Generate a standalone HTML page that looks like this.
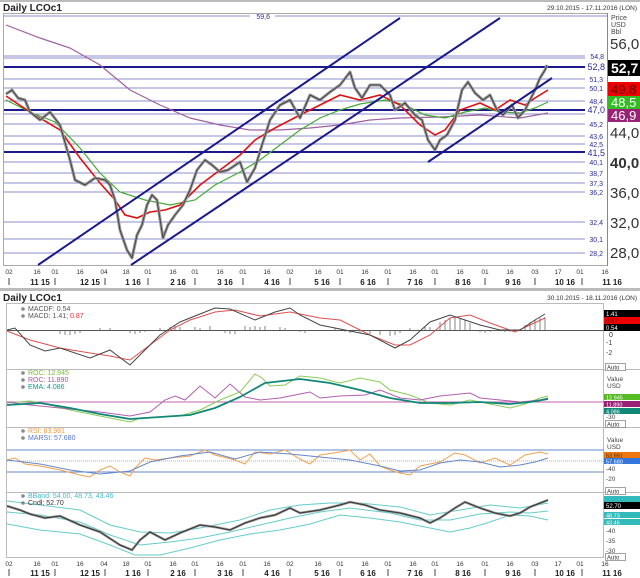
<!DOCTYPE html>
<html><head><meta charset="utf-8"><style>
body{margin:0;background:#fff;}
svg{display:block;font-family:"Liberation Sans",sans-serif;}
.s{font-size:7px;fill:#2a2a9a}
.ax{font-size:15px;fill:#333}
.t{font-size:6.5px;fill:#333}
.m{font-size:8px;fill:#222;font-weight:bold}
.lg{font-size:7px}
</style></head><body>
<svg width="640" height="578" viewBox="0 0 640 578">
<rect width="640" height="578" fill="#fff"/>
<rect x="0" y="0" width="640" height="2" fill="#bbb"/>
<text x="3" y="11" font-size="10" font-weight="bold" fill="#222">Daily LCOc1</text>
<text x="637" y="10" font-size="6.5" fill="#333" text-anchor="end">29.10.2015 - 17.11.2016 (LON)</text>
<rect x="3.5" y="13.5" width="604" height="252" fill="none" stroke="#aaa"/>
<line x1="607.5" y1="13" x2="607.5" y2="266" stroke="#888"/>
<text x="611" y="20" font-size="7" fill="#444">Price</text>
<text x="611" y="27" font-size="7" fill="#444">USD</text>
<text x="611" y="34" font-size="7" fill="#444">Bbl</text>
<g stroke="#8c8ccc" stroke-width="1">
<line x1="4" y1="16" x2="250" y2="16"/><line x1="275" y1="16" x2="607" y2="16"/>
<line x1="4" y1="56" x2="585" y2="56"/><line x1="4" y1="58" x2="585" y2="58"/>
<line x1="4" y1="79" x2="585" y2="79"/><line x1="4" y1="88" x2="585" y2="88"/>
<line x1="4" y1="101" x2="585" y2="101"/><line x1="4" y1="114" x2="585" y2="114"/>
<line x1="4" y1="124" x2="585" y2="124"/><line x1="4" y1="136" x2="585" y2="136"/>
<line x1="4" y1="144" x2="585" y2="144"/><line x1="4" y1="162" x2="585" y2="162"/>
<line x1="4" y1="173" x2="585" y2="173"/><line x1="4" y1="183" x2="585" y2="183"/>
<line x1="4" y1="192" x2="585" y2="192"/><line x1="4" y1="222" x2="585" y2="222"/>
<line x1="4" y1="239" x2="585" y2="239"/><line x1="4" y1="253" x2="585" y2="253"/>
</g>
<g stroke="#1a1a8c" stroke-width="2">
<line x1="4" y1="67" x2="585" y2="67"/><line x1="4" y1="110" x2="585" y2="110"/><line x1="4" y1="152" x2="585" y2="152"/>
</g>
<g class="s" text-anchor="end">
<text x="270" y="19">59,6</text>
<text x="604" y="59">54,8</text><text x="605" y="70" font-size="9">52,8</text>
<text x="603" y="82">51,3</text><text x="603" y="91">50,1</text><text x="603" y="104">48,4</text>
<text x="605" y="113" font-size="9">47,0</text><text x="603" y="127">45,2</text>
<text x="603" y="139">43,6</text><text x="603" y="147">42,5</text><text x="605" y="156" font-size="9">41,5</text>
<text x="603" y="165">40,1</text><text x="603" y="176">38,7</text><text x="603" y="186">37,3</text>
<text x="603" y="195">36,2</text><text x="603" y="225">32,4</text><text x="603" y="242">30,1</text><text x="603" y="256">28,2</text>
</g>
<g class="ax">
<text x="610" y="49">56,0</text><text x="610" y="138">44,0</text>
<text x="610" y="168" font-weight="bold">40,0</text><text x="610" y="198">36,0</text>
<text x="610" y="228">32,0</text><text x="610" y="258">28,0</text>
</g>
<rect x="608" y="60" width="32" height="16" fill="#000"/><text x="611" y="73" font-size="14" fill="#fff" font-weight="bold">52,7</text>
<rect x="608" y="82" width="32" height="14" fill="#e00"/><text x="611" y="94" font-size="13" fill="#600">49,8</text>
<rect x="608" y="96" width="32" height="13" fill="#33bb22"/><text x="611" y="107" font-size="13" fill="#fff">48,5</text>
<rect x="608" y="109" width="32" height="13" fill="#992277"/><text x="611" y="120" font-size="13" fill="#fff">46,9</text>
<polyline fill="none" stroke="#a060a0" stroke-width="1.2" points="6,25 40,38 70,48 100,65 130,90 160,105 190,118 220,125 250,130 280,130 310,128 340,125 370,120 400,118 440,117 480,115 520,118 548,113"/>
<polyline fill="none" stroke="#44aa33" stroke-width="1.2" points="6,100 30,112 55,122 80,148 100,173 120,192 145,200 170,205 195,200 215,185 240,172 260,160 280,145 300,130 320,118 340,110 360,104 385,100 405,105 425,115 445,118 465,112 485,108 500,112 520,113 535,108 548,102"/>
<polyline fill="none" stroke="#e01010" stroke-width="1.6" points="6,96 30,112 60,130 80,158 100,183 115,200 125,215 137,218 150,212 165,210 180,205 200,185 220,170 240,155 255,140 275,128 300,115 320,105 340,95 360,100 380,95 400,105 420,125 435,135 445,130 460,110 480,103 495,110 510,100 525,105 535,98 548,90"/>
<g fill="none" stroke-linejoin="round">
<polyline stroke="#999" stroke-width="3" points="6,94 12,90 18,98 25,100 30,112 40,120 50,112 60,125 70,160 75,180 85,185 95,178 105,180 110,185 115,200 120,230 127,250 132,258 137,235 142,225 147,205 152,195 157,200 163,238 168,225 175,215 183,205 190,190 197,170 205,160 212,165 220,172 228,170 240,162 247,182 255,168 262,145 270,120 280,105 290,100 300,118 310,95 320,100 330,92 340,85 350,72 355,88 362,98 370,85 380,85 390,95 395,110 405,103 415,115 422,120 428,140 435,150 440,140 447,135 455,120 462,90 468,82 475,93 483,100 490,95 497,110 503,115 512,105 518,118 525,110 530,100 535,90 540,78 545,70 547,65"/>
<polyline stroke="#444" stroke-width="1" points="6,94 12,90 18,98 25,100 30,112 40,120 50,112 60,125 70,160 75,180 85,185 95,178 105,180 110,185 115,200 120,230 127,250 132,258 137,235 142,225 147,205 152,195 157,200 163,238 168,225 175,215 183,205 190,190 197,170 205,160 212,165 220,172 228,170 240,162 247,182 255,168 262,145 270,120 280,105 290,100 300,118 310,95 320,100 330,92 340,85 350,72 355,88 362,98 370,85 380,85 390,95 395,110 405,103 415,115 422,120 428,140 435,150 440,140 447,135 455,120 462,90 468,82 475,93 483,100 490,95 497,110 503,115 512,105 518,118 525,110 530,100 535,90 540,78 545,70 547,65"/>
</g>
<g stroke="#1a1a8c" stroke-width="2">
<line x1="38" y1="265" x2="400" y2="18"/><line x1="131" y1="265" x2="500" y2="18"/><line x1="428" y1="162" x2="552" y2="78"/>
</g>
<g class="t" text-anchor="middle">
<text x="9" y="274">02</text><text x="37" y="274">16</text><text x="55" y="274">01</text><text x="80" y="274">16</text><text x="104" y="274">04</text><text x="126" y="274">18</text><text x="148" y="274">01</text><text x="173" y="274">16</text><text x="195" y="274">01</text><text x="220" y="274">16</text><text x="243" y="274">01</text><text x="267" y="274">16</text><text x="290" y="274">02</text><text x="318" y="274">16</text><text x="340" y="274">01</text><text x="365" y="274">16</text><text x="388" y="274">01</text><text x="413" y="274">16</text><text x="435" y="274">01</text><text x="460" y="274">16</text><text x="485" y="274">01</text><text x="510" y="274">16</text><text x="535" y="274">03</text><text x="558" y="274">17</text><text x="580" y="274">01</text><text x="605" y="274">16</text>
</g>
<g class="m" text-anchor="middle">
<text x="40" y="285">11 15</text><text x="90" y="285">12 15</text><text x="133" y="285">1 16</text><text x="178" y="285">2 16</text><text x="225" y="285">3 16</text><text x="272" y="285">4 16</text><text x="322" y="285">5 16</text><text x="368" y="285">6 16</text><text x="415" y="285">7 16</text><text x="463" y="285">8 16</text><text x="513" y="285">9 16</text><text x="565" y="285">10 16</text><text x="612" y="285">11 16</text>
</g>
<g stroke="#444"><line x1="9" y1="278" x2="9" y2="285"/><line x1="55" y1="278" x2="55" y2="285"/><line x1="105" y1="278" x2="105" y2="285"/><line x1="148" y1="278" x2="148" y2="285"/><line x1="195" y1="278" x2="195" y2="285"/><line x1="243" y1="278" x2="243" y2="285"/><line x1="290" y1="278" x2="290" y2="285"/><line x1="340" y1="278" x2="340" y2="285"/><line x1="388" y1="278" x2="388" y2="285"/><line x1="435" y1="278" x2="435" y2="285"/><line x1="485" y1="278" x2="485" y2="285"/><line x1="535" y1="278" x2="535" y2="285"/><line x1="582" y1="278" x2="582" y2="285"/></g>
<rect x="0" y="288" width="640" height="3" fill="#bbb"/>
<text x="3" y="301" font-size="10" font-weight="bold" fill="#222">Daily LCOc1</text>
<text x="637" y="300" font-size="6.5" fill="#333" text-anchor="end">30.10.2015 - 18.11.2016 (LON)</text>
<g fill="none" stroke="#bbb">
<rect x="6.5" y="303.5" width="597" height="254"/>
<line x1="6" y1="369.5" x2="640" y2="369.5"/><line x1="6" y1="427.5" x2="640" y2="427.5"/><line x1="6" y1="492.5" x2="640" y2="492.5"/>
</g>
<line x1="7" y1="330.5" x2="604" y2="330.5" stroke="#555"/>
<g stroke="#666" stroke-width="0.8">
<path d="M60 330v4M65 330v5M70 330v5M75 330v4M80 330v3M100 330v-2M110 330v-2M130 330v3M135 330v4M140 330v3M145 330v2M160 330v-2M170 330v-3M175 330v-4M180 330v-3M195 330v-3M200 330v-2M210 330v-4M225 330v3M230 330v4M235 330v4M245 330v-4M250 330v-3M255 330v-4M260 330v-3M265 330v-4M280 330v-3M285 330v-2M300 330v2M305 330v3M335 330v-2M345 330v2M350 330v3M360 330v3M370 330v4M380 330v5M390 330v6M395 330v5M400 330v3M410 330v-2M425 330v-3M430 330v-3M440 330v-8M445 330v-10M450 330v-12M455 330v-13M460 330v-12M465 330v-10M470 330v-7M480 330v2M485 330v3M490 330v2M505 330v2M510 330v2M525 330v-5M530 330v-8M535 330v-10M540 330v-12M545 330v-13"/>
</g>
<polyline fill="none" stroke="#e05050" stroke-width="1" points="7,331 30,340 60,348 90,353 110,356 130,360 150,345 170,330 190,320 215,312 235,310 260,316 290,312 320,318 340,320 370,335 395,345 410,345 430,335 450,318 470,315 490,323 515,332 530,325 545,318"/>
<polyline fill="none" stroke="#444" stroke-width="1" points="7,330 15,328 30,345 45,351 60,348 90,358 110,350 130,365 145,350 160,335 180,322 200,314 215,308 230,309 255,320 275,312 290,308 300,315 320,325 345,330 370,335 395,348 410,340 430,322 450,315 465,320 480,325 500,330 520,330 535,320 545,314"/>
<g class="lg"><text x="28" y="311" fill="#555">MACDF: 0.54</text><text x="28" y="318" fill="#555">MACD: 1.41; <tspan fill="#e33">0.87</tspan></text></g>
<circle cx="23" cy="309" r="1.8" fill="#888"/><circle cx="23" cy="316" r="1.8" fill="#888"/>
<rect x="604" y="310" width="36" height="7" fill="#000"/><text x="606" y="316" font-size="6" fill="#fff">1.41</text>
<rect x="604" y="317" width="36" height="7" fill="#e00"/><text x="606" y="323" font-size="6" fill="#600">0.87</text>
<rect x="604" y="324" width="36" height="7" fill="#000"/><text x="606" y="330" font-size="6" fill="#fff">0.54</text>
<text x="609" y="337" font-size="7" fill="#222">0</text><text x="606" y="345" font-size="7" fill="#444">-1</text><text x="606" y="355" font-size="7" fill="#444">-2</text>
<rect x="605.5" y="363.5" width="20" height="7" fill="#fff" stroke="#666" stroke-width="0.6"/><text x="607" y="369.5" font-size="6" fill="#333">Auto</text>
<line x1="7" y1="402" x2="604" y2="402" stroke="#c060b0" stroke-width="1"/>
<polyline fill="none" stroke="#88cc55" stroke-width="1" points="7,403 30,401 50,405 70,410 90,414 110,418 130,422 140,418 160,417 180,416 200,410 220,400 240,392 255,374 262,378 270,386 285,385 300,376 320,378 340,383 360,378 380,382 390,390 410,395 430,403 450,405 470,400 490,404 510,408 525,404 540,398 548,396"/>
<polyline fill="none" stroke="#b060b0" stroke-width="1" points="7,402 30,405 60,408 100,412 130,416 150,412 165,400 175,396 185,400 200,386 215,398 230,384 245,397 260,400 280,398 300,394 310,392 320,398 340,396 365,395 380,390 400,398 420,400 440,396 470,393 480,398 500,400 520,402 540,400 548,398"/>
<polyline fill="none" stroke="#118877" stroke-width="1.8" points="7,405 40,403 70,408 100,414 130,419 160,417 190,415 215,408 240,397 265,383 300,379 330,383 360,390 390,398 420,403 450,403 480,402 510,404 530,402 548,399"/>
<g class="lg"><text x="28" y="375" fill="#77bb33">ROC: 12.945</text><text x="28" y="382" fill="#b050a0">ROC: 11.890</text><text x="28" y="389" fill="#119988">EMA: 4.086</text></g>
<circle cx="23" cy="373" r="1.8" fill="#888"/><circle cx="23" cy="380" r="1.8" fill="#888"/><circle cx="23" cy="387" r="1.8" fill="#888"/>
<text x="607" y="381" font-size="6.5" fill="#444">Value</text><text x="607" y="388" font-size="6.5" fill="#444">USD</text>
<rect x="604" y="394" width="36" height="6" fill="#55bb22"/><text x="606" y="399.5" font-size="5.5" fill="#fff">12.945</text>
<rect x="604" y="401" width="36" height="6" fill="#992277"/><text x="606" y="406.5" font-size="5.5" fill="#fff">11.890</text>
<rect x="604" y="408" width="36" height="6" fill="#118877"/><text x="606" y="413.5" font-size="5.5" fill="#fff">4.086</text>
<text x="606" y="419" font-size="6.5" fill="#444">-30</text>
<rect x="605.5" y="420.5" width="20" height="7" fill="#fff" stroke="#666" stroke-width="0.6"/><text x="607" y="426.5" font-size="6" fill="#333">Auto</text>
<line x1="7" y1="450" x2="604" y2="450" stroke="#6688cc"/><line x1="7" y1="472" x2="604" y2="472" stroke="#6688cc"/>
<line x1="7" y1="461" x2="604" y2="461" stroke="#88bbee" stroke-dasharray="1 1"/>
<polyline fill="none" stroke="#f0a050" stroke-width="1" points="7,460 15,458 25,464 40,466 60,470 80,475 90,477 100,470 110,466 120,472 130,476 135,468 145,458 155,460 170,458 190,456 205,450 215,455 235,460 245,464 255,452 270,454 285,450 300,459 310,464 320,455 340,452 350,450 360,460 370,454 380,466 390,470 400,473 410,475 420,466 440,462 455,453 465,455 480,463 495,458 510,465 525,455 540,452 548,454"/>
<polyline fill="none" stroke="#6688cc" stroke-width="1" points="7,460 40,464 70,470 100,474 130,471 150,462 180,456 210,452 235,459 260,452 290,454 320,457 350,460 380,466 400,471 420,470 440,463 460,460 480,462 500,467 520,465 535,462 548,458"/>
<g class="lg"><text x="28" y="433" fill="#ee9944">RSI: 63.981</text><text x="28" y="440" fill="#5577cc">MARSI: 57.680</text></g>
<circle cx="23" cy="431" r="1.8" fill="#888"/><circle cx="23" cy="438" r="1.8" fill="#888"/>
<text x="607" y="442" font-size="6.5" fill="#444">Value</text><text x="607" y="449" font-size="6.5" fill="#444">USD</text>
<rect x="604" y="452" width="36" height="6" fill="#ee7711"/><text x="606" y="457.5" font-size="5.5" fill="#333">63.981</text>
<rect x="604" y="458" width="36" height="6" fill="#3377dd"/><text x="606" y="463.5" font-size="5.5" fill="#fff">57.680</text>
<text x="606" y="471" font-size="6.5" fill="#444">-40</text><text x="606" y="481" font-size="6.5" fill="#444">-20</text>
<rect x="605.5" y="487.5" width="20" height="7" fill="#fff" stroke="#666" stroke-width="0.6"/><text x="607" y="493.5" font-size="6" fill="#333">Auto</text>
<polyline fill="none" stroke="#66cccc" stroke-width="1" points="7,501 40,505 80,510 110,525 140,532 170,533 200,528 240,520 270,510 300,505 330,503 360,503 400,507 430,515 460,510 490,505 520,508 548,503"/>
<polyline fill="none" stroke="#66cccc" stroke-width="1" points="7,512 40,515 80,522 110,535 140,545 170,542 200,538 230,532 260,525 290,518 320,512 350,508 390,513 420,520 450,520 480,514 510,512 530,513 548,511"/>
<polyline fill="none" stroke="#66cccc" stroke-width="1" points="7,524 40,530 80,534 110,545 135,555 160,555 190,548 220,540 250,534 280,530 310,524 340,515 370,518 400,522 430,528 450,532 470,528 490,522 510,515 530,516 548,520"/>
<polyline fill="none" stroke="#999" stroke-width="2.5" points="7,506 20,510 30,514 45,518 60,516 80,525 100,532 120,545 132,550 140,540 150,532 165,540 180,533 200,525 215,527 230,530 245,523 260,518 275,515 290,508 300,513 320,510 340,505 350,502 365,505 380,510 400,513 420,518 430,523 440,518 455,508 465,502 480,508 495,513 510,516 520,513 530,507 548,500"/>
<polyline fill="none" stroke="#333" stroke-width="1" points="7,506 20,510 30,514 45,518 60,516 80,525 100,532 120,545 132,550 140,540 150,532 165,540 180,533 200,525 215,527 230,530 245,523 260,518 275,515 290,508 300,513 320,510 340,505 350,502 365,505 380,510 400,513 420,518 430,523 440,518 455,508 465,502 480,508 495,513 510,516 520,513 530,507 548,500"/>
<g class="lg"><text x="28" y="498" fill="#44bbcc">BBand: 54.00, 48.73, 43.46</text><text x="28" y="505" fill="#333">Cndl: 52.70</text></g>
<circle cx="23" cy="496" r="1.8" fill="#888"/><circle cx="23" cy="503" r="1.8" fill="#888"/>
<rect x="604" y="496" width="36" height="6" fill="#33bbbb"/><rect x="604" y="502" width="36" height="7" fill="#000"/><text x="606" y="508" font-size="6" fill="#fff">52.70</text>
<rect x="604" y="512" width="36" height="6" fill="#33bbbb"/><text x="606" y="517.5" font-size="5.5" fill="#fff">48.73</text>
<rect x="604" y="519" width="36" height="6" fill="#33bbbb"/><text x="606" y="524.5" font-size="5.5" fill="#fff">43.46</text>
<text x="606" y="533" font-size="6.5" fill="#444">-40</text><text x="606" y="543" font-size="6.5" fill="#444">-35</text><text x="606" y="553" font-size="6.5" fill="#444">-30</text>
<rect x="605.5" y="553.5" width="20" height="7" fill="#fff" stroke="#666" stroke-width="0.6"/><text x="607" y="559.5" font-size="6" fill="#333">Auto</text>
<g class="t" text-anchor="middle">
<text x="9" y="566">02</text><text x="37" y="566">16</text><text x="55" y="566">01</text><text x="80" y="566">16</text><text x="104" y="566">04</text><text x="126" y="566">18</text><text x="148" y="566">01</text><text x="173" y="566">16</text><text x="195" y="566">01</text><text x="220" y="566">16</text><text x="243" y="566">01</text><text x="267" y="566">16</text><text x="290" y="566">02</text><text x="318" y="566">16</text><text x="340" y="566">01</text><text x="365" y="566">16</text><text x="388" y="566">01</text><text x="413" y="566">16</text><text x="435" y="566">01</text><text x="460" y="566">16</text><text x="485" y="566">01</text><text x="510" y="566">16</text><text x="535" y="566">03</text><text x="558" y="566">17</text><text x="580" y="566">01</text><text x="605" y="566">16</text>
</g>
<g class="m" text-anchor="middle">
<text x="40" y="576">11 15</text><text x="90" y="576">12 15</text><text x="133" y="576">1 16</text><text x="178" y="576">2 16</text><text x="225" y="576">3 16</text><text x="272" y="576">4 16</text><text x="322" y="576">5 16</text><text x="368" y="576">6 16</text><text x="415" y="576">7 16</text><text x="463" y="576">8 16</text><text x="513" y="576">9 16</text><text x="565" y="576">10 16</text><text x="612" y="576">11 16</text>
</g>
<g stroke="#444"><line x1="9" y1="569" x2="9" y2="576"/><line x1="55" y1="569" x2="55" y2="576"/><line x1="105" y1="569" x2="105" y2="576"/><line x1="148" y1="569" x2="148" y2="576"/><line x1="195" y1="569" x2="195" y2="576"/><line x1="243" y1="569" x2="243" y2="576"/><line x1="290" y1="569" x2="290" y2="576"/><line x1="340" y1="569" x2="340" y2="576"/><line x1="388" y1="569" x2="388" y2="576"/><line x1="435" y1="569" x2="435" y2="576"/><line x1="485" y1="569" x2="485" y2="576"/><line x1="535" y1="569" x2="535" y2="576"/><line x1="582" y1="569" x2="582" y2="576"/></g>
</svg>
</body></html>
